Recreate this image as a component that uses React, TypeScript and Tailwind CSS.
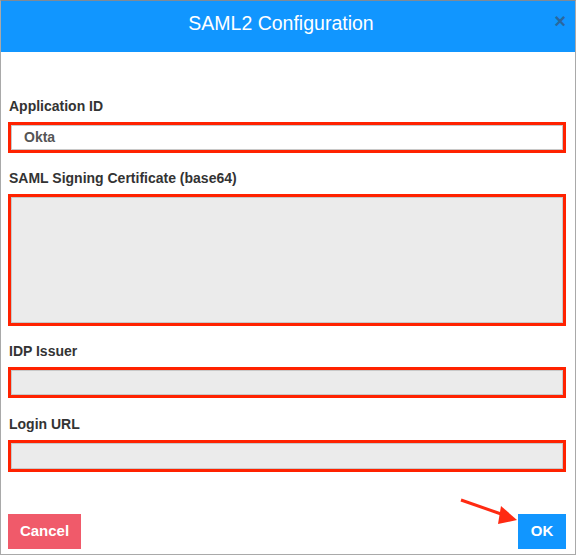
import React from "react";

type FieldProps = {
  label: string;
  value?: string;
  height: string;
  filled?: boolean;
  className?: string;
};

function Field({ label, value, height, filled, className }: FieldProps) {
  return (
    <div className={className}>
      <label className="block h-5 leading-5 text-[14px] font-bold text-[#333] pl-px">{label}</label>
      <div className={`mt-[6px] border-[3px] border-[#ff2200] ${height}`}>
        <div
          className={`h-full border border-[#c8c8c8] ${filled ? "bg-white" : "bg-[#ebebeb]"} px-3 flex items-center text-[14px] font-bold text-[#555]`}
        >
          {value}
        </div>
      </div>
    </div>
  );
}

export default function App() {
  return (
    <div
      className="relative w-[576px] h-[555px] bg-white border border-[#a9a9a9] border-t-[#7f8a96] flex flex-col"
      style={{ fontFamily: '"Liberation Sans", Arial, sans-serif' }}
    >
      <div className="relative h-[51px] bg-[#1196ff] flex items-center justify-center pb-[5px] pr-[14px]">
        <h2 className="text-white text-[19.5px] leading-none">SAML2 Configuration</h2>
        <span className="absolute right-[9px] top-[10px] text-[#2a679e] text-[20px] font-bold leading-none">×</span>
      </div>

      <div className="pl-[7px] pr-[9px] pt-[44px] flex flex-col">
        <Field label="Application ID" value="Okta" height="h-[31px]" filled />
        <Field label="SAML Signing Certificate (base64)" height="h-[132px]" className="mt-[15px]" />
        <Field label="IDP Issuer" height="h-[31px]" className="mt-[15px]" />
        <Field label="Login URL" height="h-[32px]" className="mt-[16px]" />
      </div>

      <div className="mt-auto mb-[5px] pl-[7px] pr-[9px] flex justify-between items-end">
        <button className="h-[35px] w-[73px] bg-[#f05a6a] text-white font-bold text-[15px]">Cancel</button>
        <button className="h-[35px] w-[48px] bg-[#1196ff] text-white font-bold text-[15px]">OK</button>
      </div>

      <svg className="absolute left-0 top-0 pointer-events-none" width="576" height="555">
        <line x1="460" y1="499" x2="503" y2="514" stroke="#ff2a12" strokeWidth="3" />
        <polygon points="516,519 500,505 497,523" fill="#ff2a12" />
      </svg>
    </div>
  );
}
